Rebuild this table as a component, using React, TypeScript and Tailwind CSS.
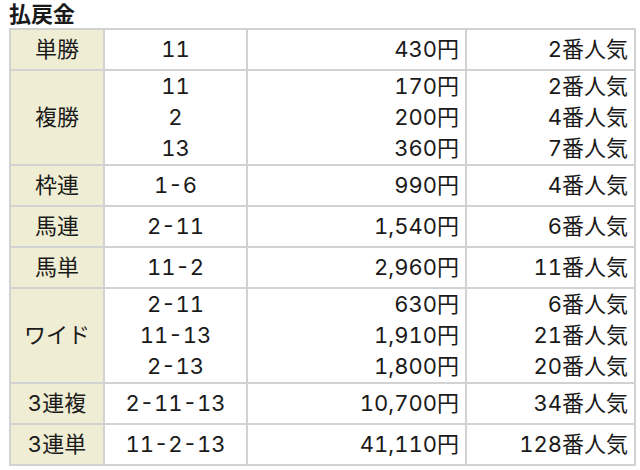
type Row = {
  label: string;
  items: { combo: string; pay: string; pop: string }[];
};

const rows: Row[] = [
  { label: "単勝", items: [{ combo: "11", pay: "430円", pop: "2番人気" }] },
  {
    label: "複勝",
    items: [
      { combo: "11", pay: "170円", pop: "2番人気" },
      { combo: "2", pay: "200円", pop: "4番人気" },
      { combo: "13", pay: "360円", pop: "7番人気" },
    ],
  },
  { label: "枠連", items: [{ combo: "1-6", pay: "990円", pop: "4番人気" }] },
  { label: "馬連", items: [{ combo: "2-11", pay: "1,540円", pop: "6番人気" }] },
  { label: "馬単", items: [{ combo: "11-2", pay: "2,960円", pop: "11番人気" }] },
  {
    label: "ワイド",
    items: [
      { combo: "2-11", pay: "630円", pop: "6番人気" },
      { combo: "11-13", pay: "1,910円", pop: "21番人気" },
      { combo: "2-13", pay: "1,800円", pop: "20番人気" },
    ],
  },
  { label: "3連複", items: [{ combo: "2-11-13", pay: "10,700円", pop: "34番人気" }] },
  { label: "3連単", items: [{ combo: "11-2-13", pay: "41,110円", pop: "128番人気" }] },
];

function Lines({ values, align }: { values: string[]; align: string }) {
  return (
    <div className={`flex flex-col justify-center ${align}`}>
      {values.map((v, i) => (
        <div key={i} className={values.length > 1 ? "leading-[31px]" : "leading-[39px]"}>
          {v}
        </div>
      ))}
    </div>
  );
}

export default function App() {
  return (
    <div
      className="w-[640px] h-[470px] bg-white text-[#1a1a1a] text-[22px] tabular-nums"
      style={{ fontFamily: 'Inter, "Noto Sans CJK JP", sans-serif' }}
    >
      <div className="h-[28px] leading-[28px] pl-[9px] font-bold">払戻金</div>
      <div className="ml-[9px] w-[627px] p-[2px] bg-[#d2d2d2] grid grid-cols-[92px_141px_217px_167px] gap-[2px]">
        {rows.map((r) => {
          const h = r.items.length > 1 ? "h-[93px]" : "h-[39px]";
          return (
            <div key={r.label} className="contents">
              <div className={`${h} bg-[#efedd3] flex items-center justify-center`}>{r.label}</div>
              <div className={`${h} bg-white flex items-center justify-center`}>
                <Lines values={r.items.map((i) => i.combo)} align="items-center" />
              </div>
              <div className={`${h} bg-white flex items-center justify-end pr-[6px]`}>
                <Lines values={r.items.map((i) => i.pay)} align="items-end" />
              </div>
              <div className={`${h} bg-white flex items-center justify-end pr-[6px]`}>
                <Lines values={r.items.map((i) => i.pop)} align="items-end" />
              </div>
            </div>
          );
        })}
      </div>
    </div>
  );
}
